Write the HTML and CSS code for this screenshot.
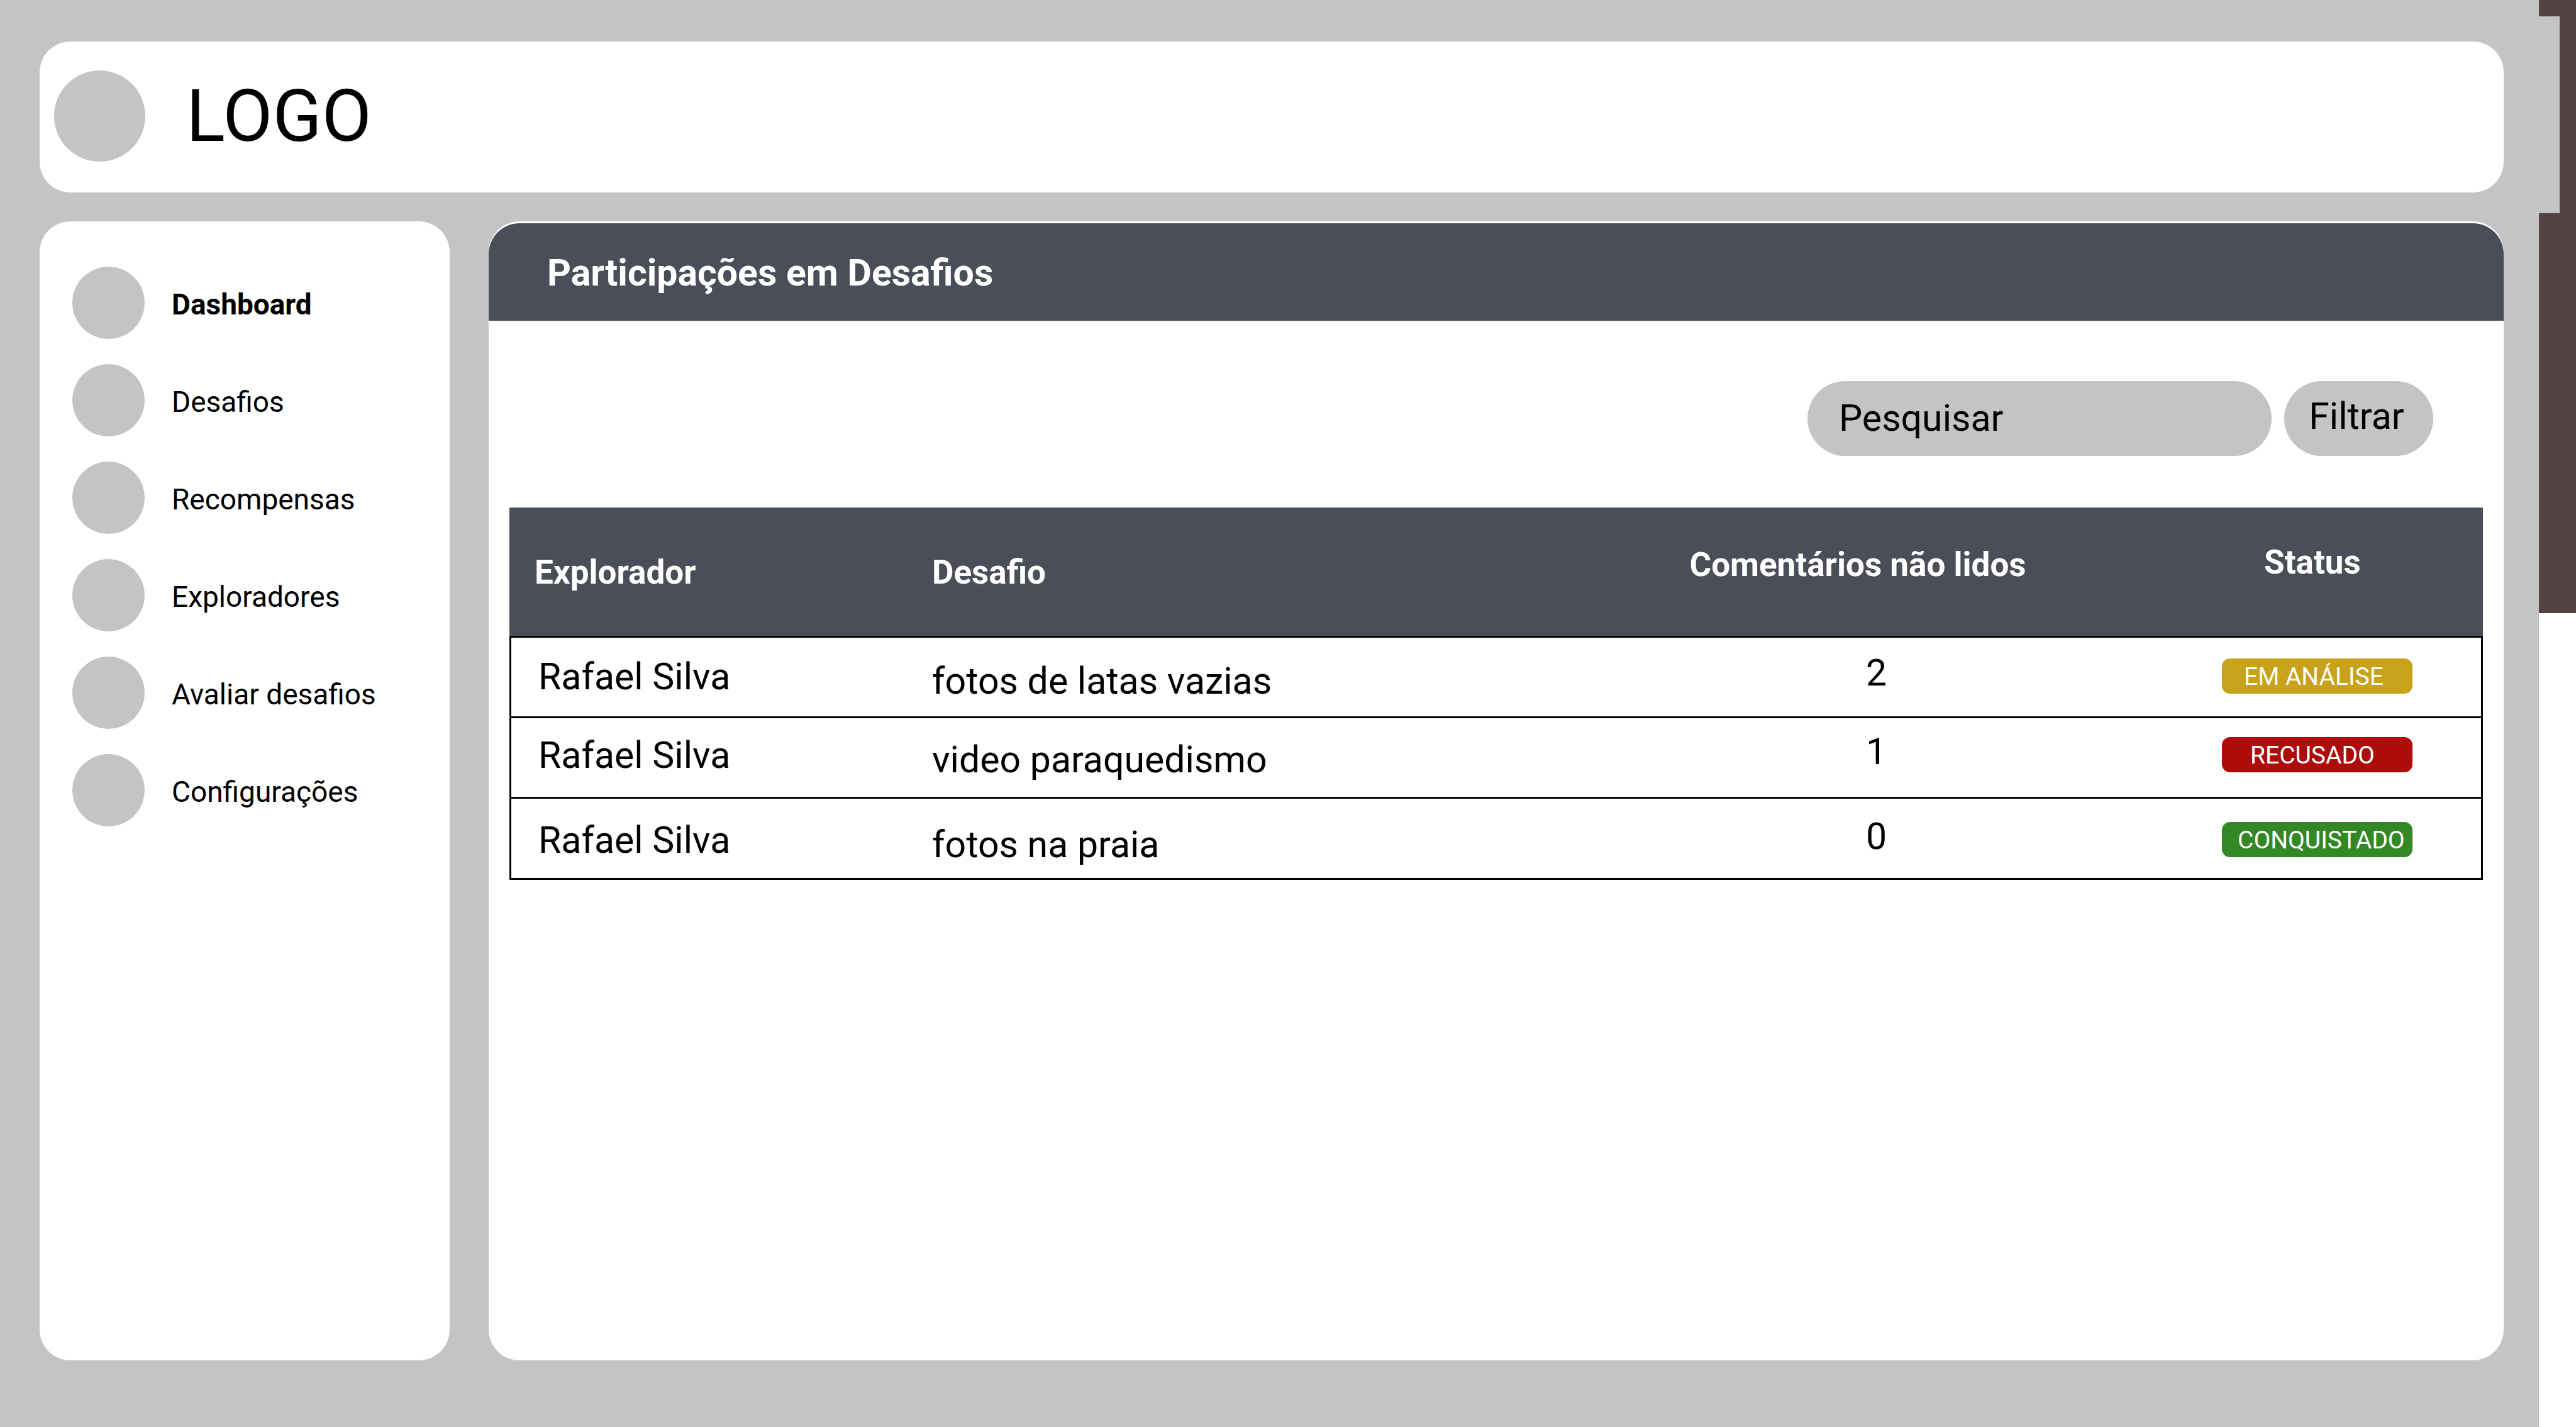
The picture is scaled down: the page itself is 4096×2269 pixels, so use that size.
FILE: index.html
```html
<!DOCTYPE html>
<html lang="pt-BR">
<head>
<meta charset="utf-8">
<title>Participações em Desafios</title>
<link rel="stylesheet" href="styles.css">
</head>
<body>
<div class="page">
  <header class="topbar">
    <span class="topbar-mark"></span>
    <span class="topbar-name">LOGO</span>
  </header>
  <div class="content">
    <nav class="sidebar">
      <a class="nav-item active" href="#"><span class="nav-icon"></span><span class="nav-label">Dashboard</span></a>
      <a class="nav-item" href="#"><span class="nav-icon"></span><span class="nav-label">Desafios</span></a>
      <a class="nav-item" href="#"><span class="nav-icon"></span><span class="nav-label">Recompensas</span></a>
      <a class="nav-item" href="#"><span class="nav-icon"></span><span class="nav-label">Exploradores</span></a>
      <a class="nav-item" href="#"><span class="nav-icon"></span><span class="nav-label">Avaliar desafios</span></a>
      <a class="nav-item" href="#"><span class="nav-icon"></span><span class="nav-label">Configurações</span></a>
    </nav>
    <main class="panel">
      <h1 class="panel-title">Participações em Desafios</h1>
      <form class="toolbar">
        <input class="search" type="text" placeholder="Pesquisar" aria-label="Pesquisar">
        <button class="filter" type="button">Filtrar</button>
      </form>
      <table class="entries">
        <colgroup>
          <col class="w-explorer">
          <col>
          <col class="w-comments">
          <col class="w-status">
        </colgroup>
        <thead>
          <tr>
            <th class="explorer" scope="col">Explorador</th>
            <th class="challenge" scope="col">Desafio</th>
            <th class="comments" scope="col">Comentários não lidos</th>
            <th class="status" scope="col">Status</th>
          </tr>
        </thead>
        <tbody>
          <tr>
            <td class="explorer">Rafael Silva</td>
            <td class="challenge">fotos de latas vazias</td>
            <td class="comments">2</td>
            <td class="status"><span class="badge review">EM ANÁLISE</span></td>
          </tr>
          <tr>
            <td class="explorer">Rafael Silva</td>
            <td class="challenge">video paraquedismo</td>
            <td class="comments">1</td>
            <td class="status"><span class="badge refused">RECUSADO</span></td>
          </tr>
          <tr>
            <td class="explorer">Rafael Silva</td>
            <td class="challenge">fotos na praia</td>
            <td class="comments">0</td>
            <td class="status"><span class="badge achieved">CONQUISTADO</span></td>
          </tr>
        </tbody>
      </table>
    </main>
  </div>
</div>
<div class="edge"><div class="edge-tab"></div></div>
</body>
</html>
```
FILE: styles.css
```css
:root {
  --gray: #c4c4c4;
  --slate: #4a4e59;
  --radius: 49px;
}

* {
  box-sizing: border-box;
}

body {
  margin: 0;
  min-height: 100vh;
  display: grid;
  grid-template-columns: minmax(0, 1fr) 59px;
  background: #fff;
  color: #000;
  font-family: Roboto, "Liberation Sans", sans-serif;
  font-size: 59px;
  line-height: 70px;
}

.page {
  display: flex;
  flex-direction: column;
  gap: 46px;
  padding: 66px 56px 106px 63px;
  background: var(--gray);
}

/* Top bar */
.topbar {
  display: flex;
  align-items: center;
  gap: 65px;
  padding: 46px 23px 49px;
  border-radius: var(--radius);
  background: #fff;
}

.topbar-mark {
  width: 145px;
  height: 145px;
  border-radius: 50%;
  background: var(--gray);
}

.topbar-name {
  font-size: 115px;
  line-height: 136px;
}

.content {
  flex: 1;
  display: flex;
  gap: 62px;
}

/* Sidebar */
.sidebar {
  flex: 0 0 652px;
  display: flex;
  flex-direction: column;
  gap: 40px;
  padding: 72px 52px;
  border-radius: var(--radius);
  background: #fff;
}

.nav-item {
  display: flex;
  align-items: center;
  gap: 43px;
  color: inherit;
  font-size: 46px;
  line-height: 54px;
  text-decoration: none;
}

.nav-item.active {
  font-weight: 700;
}

.nav-icon {
  width: 115px;
  height: 115px;
  border-radius: 50%;
  background: var(--gray);
}

.nav-label {
  padding-top: 4px;
}

/* Main panel */
.panel {
  flex: 1;
  min-width: 0;
  padding-top: 3px;
  border-radius: var(--radius);
  background: #fff;
}

.panel-title {
  margin: 0;
  padding: 44px 93px 41px;
  border-radius: var(--radius) var(--radius) 0 0;
  background: var(--slate);
  color: #fff;
  font-size: 59px;
  font-weight: 700;
  line-height: 70px;
}

.toolbar {
  display: flex;
  justify-content: flex-end;
  gap: 20px;
  margin: 0;
  padding: 96px 112px 82px;
}

.search,
.filter {
  height: 119px;
  border: 0;
  border-radius: 60px;
  background: var(--gray);
  color: #000;
  font: inherit;
}

.search {
  width: 738px;
  padding: 0 50px 2px;
}

.search::placeholder {
  color: #000;
  opacity: 1;
}

.filter {
  width: 237px;
  padding: 0 7px 8px 0;
}

/* Entries table */
.entries {
  width: calc(100% - 66px);
  margin: 0 33px;
  border-spacing: 0;
  table-layout: fixed;
}

.w-explorer {
  width: 632px;
}

.w-comments {
  width: 864px;
}

.w-status {
  width: 562px;
}

.entries th,
.entries td {
  padding: 0;
  text-align: left;
  vertical-align: top;
}

.entries th {
  height: 204px;
  padding-top: 72px;
  background: var(--slate);
  color: #fff;
  font-size: 53px;
  font-weight: 700;
  line-height: 62px;
}

.entries th.explorer {
  padding-left: 40px;
}

.entries .challenge {
  padding-left: 40px;
}

.entries th.comments {
  padding-top: 60px;
  text-align: center;
}

.entries th.status {
  padding-top: 56px;
  padding-left: 214px;
}

.entries tbody tr {
  --row-top: 27px;
}

.entries tbody tr:nth-child(2) {
  --row-top: 24px;
}

.entries tbody tr:nth-child(3) {
  --row-top: 31px;
}

.entries td {
  height: 128px;
  border-top: 3px solid #000;
}

.entries td:first-child {
  border-left: 3px solid #000;
}

.entries td:last-child {
  border-right: 3px solid #000;
}

.entries tr:last-child td {
  height: 132px;
  border-bottom: 3px solid #000;
}

.entries td.explorer {
  padding-top: var(--row-top);
  padding-left: 43px;
}

.entries td.challenge {
  padding-top: calc(var(--row-top) + 7px);
}

.entries td.comments {
  padding-top: calc(var(--row-top) - 6px);
  padding-left: 59px;
  text-align: center;
}

.entries td.status {
  padding-top: calc(var(--row-top) + 6px);
  padding-left: 147px;
}

.badge {
  display: block;
  width: 303px;
  height: 56px;
  padding-top: 3px;
  border-radius: 13px;
  color: #fff;
  font-size: 39px;
  line-height: 53px;
}

.badge.review {
  padding-left: 35px;
  background: #c8a21a;
}

.badge.refused {
  padding-left: 45px;
  background: #ae0b0b;
}

.badge.achieved {
  padding-left: 25px;
  background: #338825;
}

/* Strip along the right edge */
.edge {
  height: 975px;
  padding: 26px 26px 0 0;
  background: #524442;
}

.edge-tab {
  height: 313px;
  background: var(--gray);
}
```
